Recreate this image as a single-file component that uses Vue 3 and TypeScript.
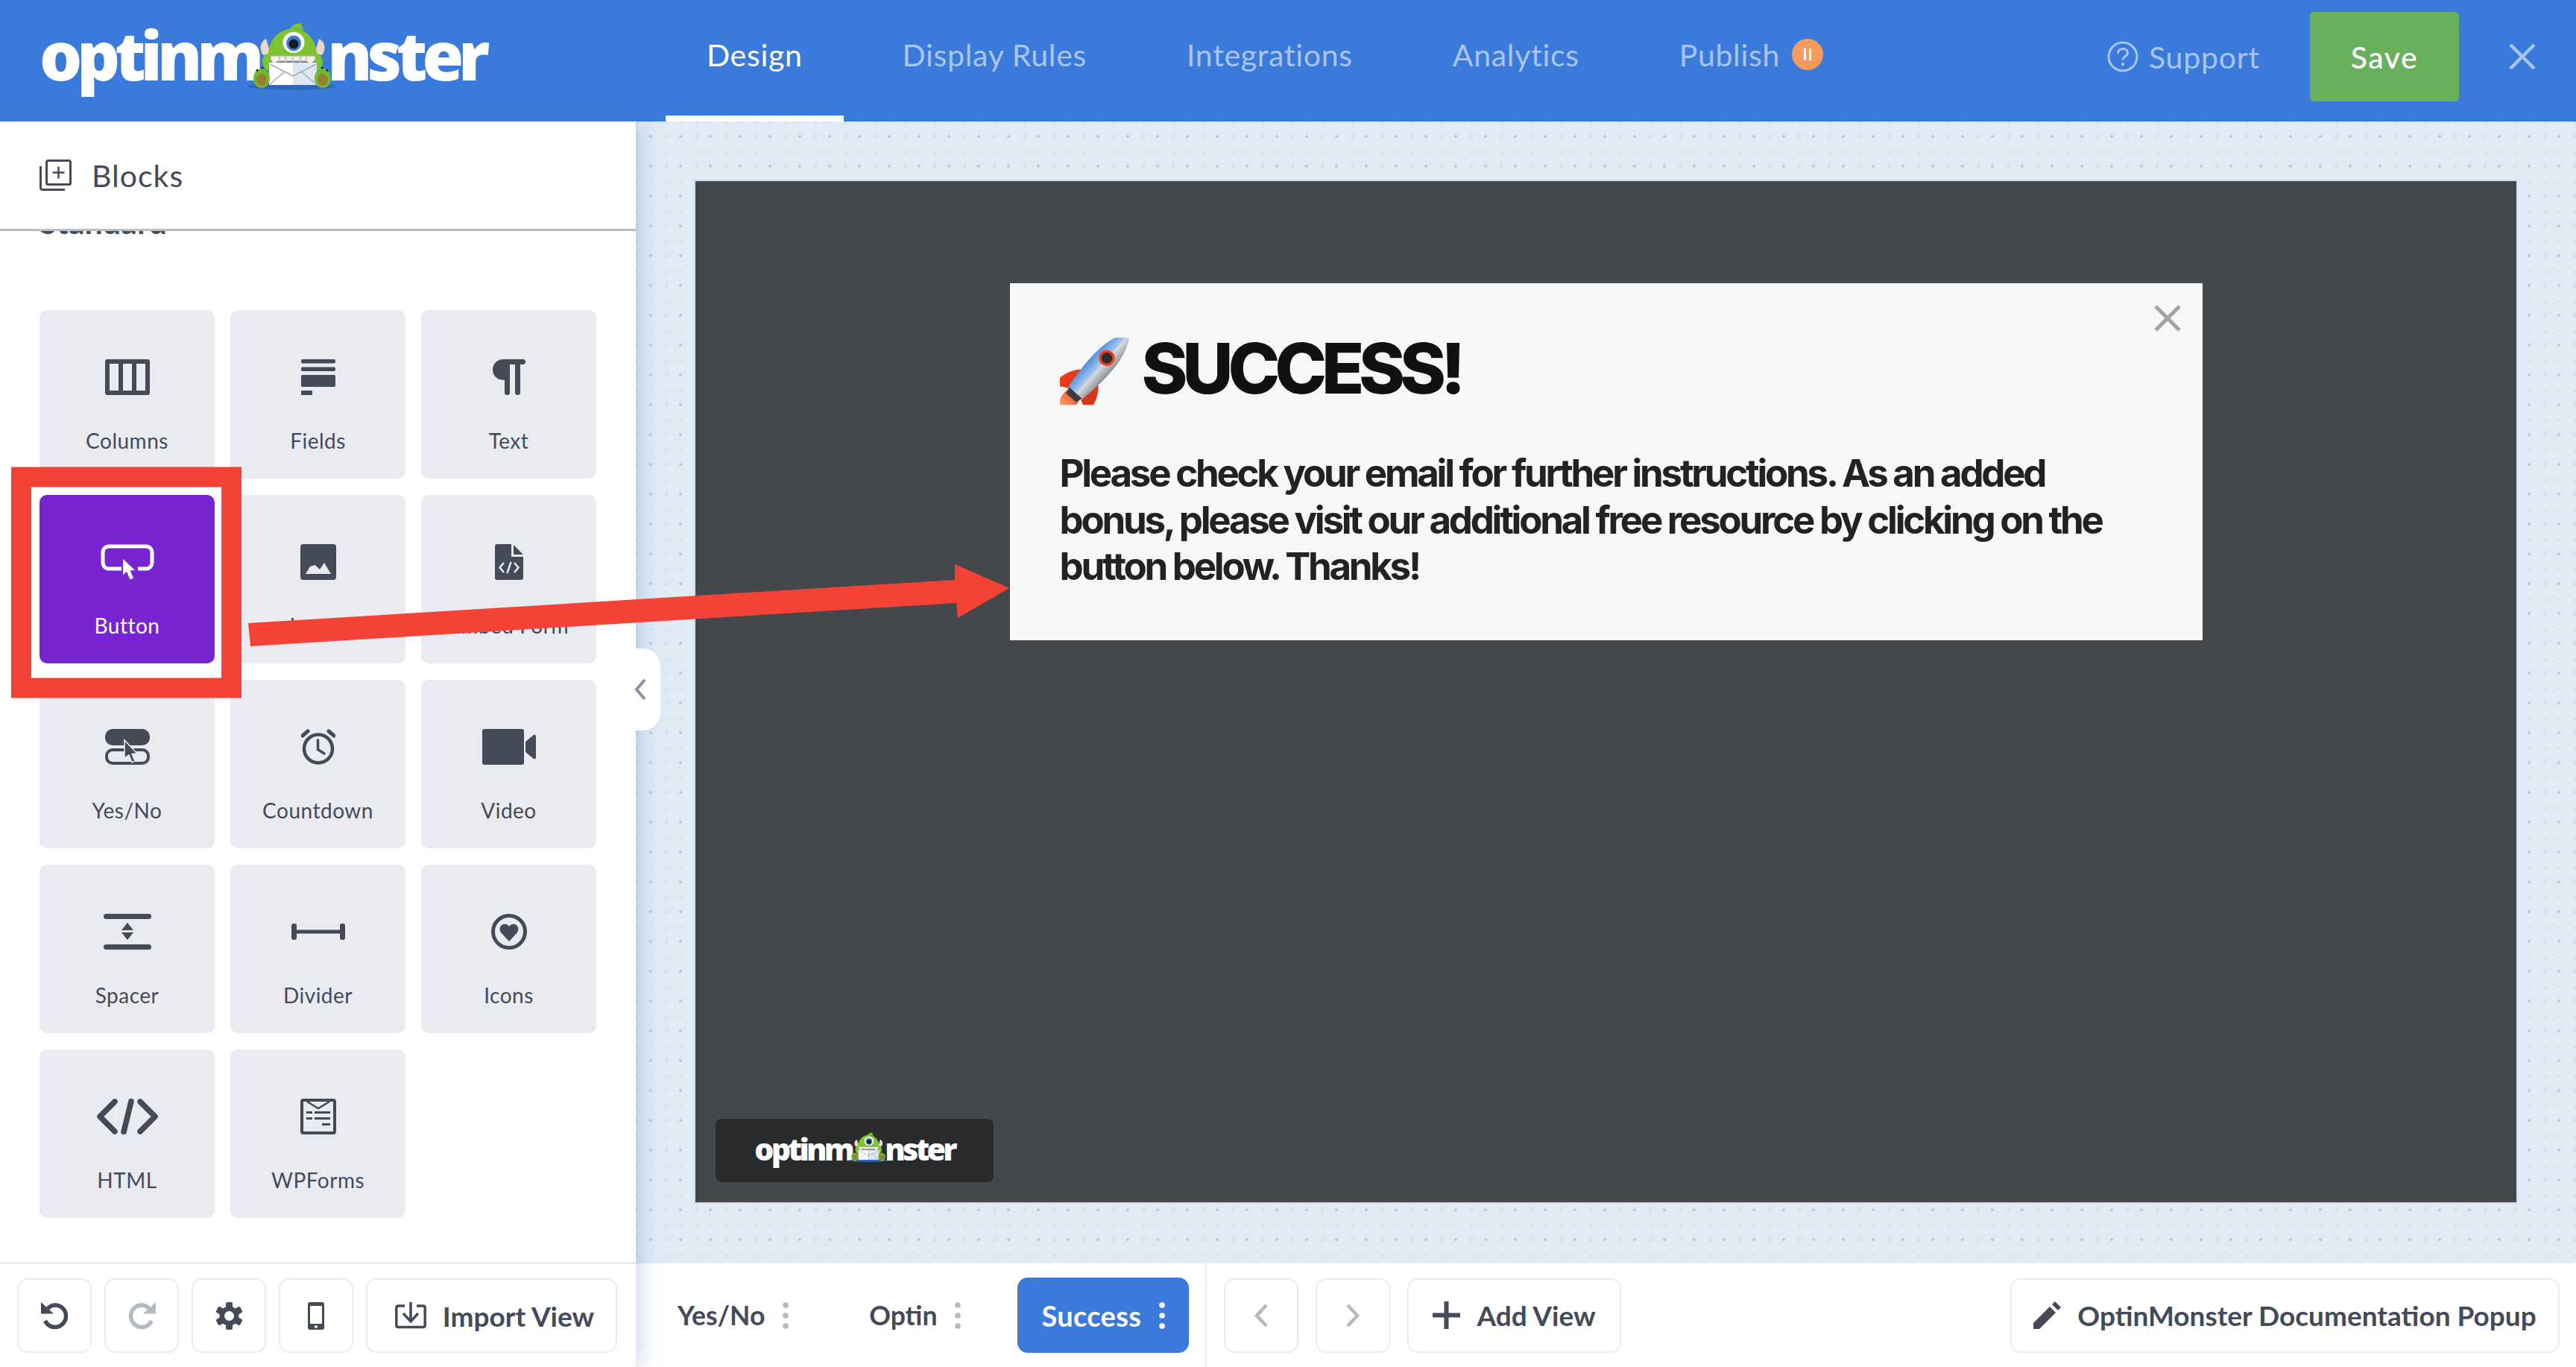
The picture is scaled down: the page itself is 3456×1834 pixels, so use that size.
<script setup lang="ts">
interface Block {
  id: string
  label: string
  w: number
  h: number
  active?: boolean
}

const navItems = ['Design', 'Display Rules', 'Integrations', 'Analytics', 'Publish']

const blocks: Block[] = [
  {id: 'columns', label: 'Columns', w: 60, h: 48},
  {id: 'fields', label: 'Fields', w: 46, h: 48},
  {id: 'para', label: 'Text', w: 44, h: 48},
  {id: 'button', label: 'Button', w: 72, h: 48, active: true},
  {id: 'image', label: 'Image', w: 48, h: 48},
  {id: 'embed', label: 'Embed Form', w: 38, h: 48},
  {id: 'yesno', label: 'Yes/No', w: 60, h: 48},
  {id: 'clock', label: 'Countdown', w: 46, h: 48},
  {id: 'video', label: 'Video', w: 72, h: 48},
  {id: 'spacer', label: 'Spacer', w: 64, h: 48},
  {id: 'divider', label: 'Divider', w: 72, h: 48},
  {id: 'heart', label: 'Icons', w: 48, h: 48},
  {id: 'code', label: 'HTML', w: 82, h: 48},
  {id: 'wpforms', label: 'WPForms', w: 48, h: 48},
]

const views = [
  {name: 'Yes/No', active: false},
  {name: 'Optin', active: false},
  {name: 'Success', active: true},
]

const gearTeeth = [0, 60, 120]
</script>

<template>
  <div class="app">
    <svg class="defs" aria-hidden="true">
      <symbol id="monster" viewBox="0 0 118 91">
        <ellipse cx="59" cy="86" rx="59" ry="4.5" fill="#2f66ba"/>
        <path d="M56 11C57 4 65 0 72 2C69 4 75 7 74 12C70 8 62 7 56 11Z" fill="#7cc52f"/>
        <path d="M24 22C16 26 14 36 20 44L30 42Z" fill="#e8d6c8"/>
        <path d="M95 22C103 26 105 36 99 44L89 42Z" fill="#e8d6c8"/>
        <path d="M19 52C19 46 23 42 27 42C28 26 38 10 60 8C82 10 91 26 92 42C96 42 100 46 100 54C100 62 94 66 90 64L88 48H31L29 64C24 66 19 60 19 52Z" fill="#7cc52f"/>
        <ellipse cx="61" cy="27" rx="14.500" ry="14" fill="#fff"/>
        <ellipse cx="61" cy="28" rx="10" ry="10.500" fill="#3c7fd1"/>
        <circle cx="61" cy="29" r="6.500" fill="#1b1b1b"/>
        <path d="M30 45H90V50L84 56L78 52H40L34 56L30 50Z" fill="#f4efe6" stroke="#a8a8a0" stroke-width="1"/>
        <path d="M42 46V53M50 46V55M60 46V55M70 46V55M78 46V53" stroke="#c9b9a8" stroke-width="1.5"/>
        <path d="M28 54H60V84H28Z" fill="#fff"/>
        <path d="M60 54H92V84H60Z" fill="#dce7f4"/>
        <path d="M29 56L60 72L91 56M29 83L49 66M91 83L71 66" fill="none" stroke="#a9adb0" stroke-width="1.6"/>
        <ellipse cx="18" cy="75" rx="11" ry="13" fill="#6fb92a"/>
        <ellipse cx="100" cy="75" rx="11" ry="13" fill="#6fb92a"/>
        <ellipse cx="18" cy="77" rx="7" ry="8" fill="#b4553f" opacity=".6"/>
        <ellipse cx="100" cy="77" rx="7" ry="8" fill="#b4553f" opacity=".6"/>
        <path d="M10 66l2-4 2 3zM17 62l2-3 2 3zM97 62l2-3 2 3zM104 65l2-3 2 4z" fill="#1b1b1b"/>
      </symbol>
      <symbol id="columns" viewBox="0 0 60 48">
        <path fill="currentColor" fill-rule="evenodd" d="M3 0H57A3 3 0 0 1 60 3V45A3 3 0 0 1 57 48H3A3 3 0 0 1 0 45V3A3 3 0 0 1 3 0ZM6 6V42H18V6ZM24 6V42H36V6ZM42 6V42H54V6Z"/>
      </symbol>
      <symbol id="fields" viewBox="0 0 46 48">
        <g fill="currentColor">
          <rect width="46" height="5.5" rx="2"/>
          <rect y="10.500" width="46" height="5.500" rx="2"/>
          <rect y="21" width="46" height="16" rx="2"/>
          <rect y="42" width="15" height="6"/>
        </g>
      </symbol>
      <symbol id="para" viewBox="0 0 44 48">
        <path fill="currentColor" d="M15 0H40.500A3.500 3.500 0 0 1 40.500 7H37V44.500A3.500 3.500 0 0 1 30 44.500V7H23V44.500A3.500 3.500 0 0 1 16 44.500V28C6 28 0 22 0 14C0 6 6 0 15 0Z"/>
      </symbol>
      <symbol id="button" viewBox="0 0 72 48">
        <path fill="none" stroke="currentColor" stroke-width="5" d="M28 33H11A8 8 0 0 1 3 25V11A8 8 0 0 1 11 3H61A8 8 0 0 1 69 11V25A8 8 0 0 1 61 33H50"/>
        <path fill="currentColor" d="M30 20V41L35 37L39.500 47.500L44 45.500L39.500 35.500L46 35Z"/>
      </symbol>
      <symbol id="image" viewBox="0 0 48 48">
        <path fill="currentColor" fill-rule="evenodd" d="M4 0H44A4 4 0 0 1 48 4V44A4 4 0 0 1 44 48H4A4 4 0 0 1 0 44V4A4 4 0 0 1 4 0ZM7 40H41L32 25L26 34L20 28L13 30Z"/>
      </symbol>
      <symbol id="embed" viewBox="0 0 38 48">
        <path fill="currentColor" fill-rule="evenodd" d="M3 0H22V17H38V45A3 3 0 0 1 35 48H3A3 3 0 0 1 0 45V3A3 3 0 0 1 3 0ZM25 1L38 14H25Z"/>
        <path fill="none" stroke="#e9ebf0" stroke-width="2.500" d="M12 25L6.500 31.500L12 38M26 25L31.500 31.500L26 38M21.500 24L16.500 39"/>
      </symbol>
      <symbol id="yesno" viewBox="0 0 60 48">
        <rect width="60" height="22" rx="10" fill="currentColor"/>
        <rect x="2" y="28" width="56" height="18" rx="8" fill="none" stroke="currentColor" stroke-width="4"/>
        <path fill="currentColor" stroke="#e9ebf0" stroke-width="1.500" d="M26 15V39L32 35L36 45L40 43L36 33.500L43 33Z"/>
      </symbol>
      <symbol id="clock" viewBox="0 0 46 48">
        <circle cx="23" cy="26.500" r="19" fill="none" stroke="currentColor" stroke-width="4.500"/>
        <path d="M22.500 15V27.500L31 33" fill="none" stroke="currentColor" stroke-width="3.500" stroke-linecap="round"/>
        <path d="M2 9L9 3M44 9L37 3" fill="none" stroke="currentColor" stroke-width="5" stroke-linecap="round"/>
      </symbol>
      <symbol id="video" viewBox="0 0 72 48">
        <path fill="currentColor" d="M3 0H53A3 3 0 0 1 56 3V45A3 3 0 0 1 53 48H3A3 3 0 0 1 0 45V3A3 3 0 0 1 3 0ZM58 17L69 8C70 7 72 8 72 10V38C72 40 70 41 69 40L58 31Z"/>
      </symbol>
      <symbol id="spacer" viewBox="0 0 64 48">
        <g fill="currentColor">
          <rect width="64" height="7" rx="3.500"/>
          <rect y="41" width="64" height="7" rx="3.500"/>
          <path d="M32 12L40 22H24ZM32 35L24 25H40Z"/>
        </g>
      </symbol>
      <symbol id="divider" viewBox="0 0 72 48">
        <g fill="currentColor">
          <rect x="0" y="13" width="7" height="22" rx="3"/>
          <rect x="65" y="13" width="7" height="22" rx="3"/>
          <rect x="4" y="21.500" width="64" height="5"/>
        </g>
      </symbol>
      <symbol id="heart" viewBox="0 0 48 48">
        <circle cx="24" cy="24" r="21.500" fill="none" stroke="currentColor" stroke-width="5"/>
        <path fill="currentColor" d="M24 37L13 25C9 19 14 12 20 14C22 14.500 23 15.500 24 17C25 15.500 26 14.500 28 14C34 12 39 19 35 25Z"/>
      </symbol>
      <symbol id="code" viewBox="0 0 82 48">
        <path fill="none" stroke="currentColor" stroke-width="7.500" stroke-linecap="round" stroke-linejoin="round" d="M24 4L4 24L24 44M58 4L78 24L58 44M46 3.500L36 44.500"/>
      </symbol>
      <symbol id="wpforms" viewBox="0 0 48 48">
        <rect x="2" y="2" width="44" height="44" rx="2" fill="none" stroke="currentColor" stroke-width="4"/>
        <path fill="none" stroke="currentColor" stroke-width="2.500" d="M9 4L24 13L39 4"/>
        <g fill="currentColor">
          <rect x="8" y="17" width="8" height="3"/>
          <rect x="19" y="17" width="21" height="3"/>
          <rect x="8" y="25" width="8" height="3"/>
          <rect x="19" y="25" width="21" height="3"/>
          <rect x="29" y="33" width="11" height="3"/>
        </g>
      </symbol>
      <symbol id="undo" viewBox="0 0 37 37">
        <path fill="none" stroke="currentColor" stroke-width="5.500" d="M9 8.500C12 5.500 15 4 19 4C27 4 33.500 10.500 33.500 18.500C33.500 26.500 27 33.500 19 33.500C13 33.500 8 30 5.500 25"/>
        <path fill="currentColor" d="M0 0L17 15.500H0Z"/>
      </symbol>
    </svg>

    <header class="topbar">
      <div class="logo">
        <span>optinm</span><svg class="logo-mark"><use href="#monster"/></svg><span>nster</span>
      </div>
      <nav class="nav">
        <a v-for="(item, i) in navItems" :key="item" class="nav-item" :class="{active: i === 0}">
          {{ item }}
          <svg v-if="item === 'Publish'" class="pause" viewBox="0 0 42 42">
            <circle cx="21" cy="21" r="21" fill="#f49b5d"/>
            <path d="M17.500 13V29M24.500 13V29" stroke="#fff" stroke-width="3"/>
          </svg>
        </a>
      </nav>
      <div class="top-actions">
        <a class="support">
          <svg viewBox="0 0 42 42" width="42" height="42" fill="none" stroke="currentColor">
            <circle cx="21" cy="21" r="19" stroke-width="3"/>
            <path d="M14.500 16.500C14.500 12.500 17.500 10.500 21 10.500C24.500 10.500 27.500 12.500 27.500 16C27.500 20.500 21 20.500 21 25.500" stroke-width="3"/>
            <path d="M21 29V33" stroke-width="3.500"/>
          </svg>
          Support
        </a>
        <button class="save">Save</button>
        <svg class="close" viewBox="0 0 36 36" fill="none" stroke="currentColor" stroke-width="4.500">
          <path d="M2 2L34 34M34 2L2 34"/>
        </svg>
      </div>
    </header>

    <div class="main">
      <aside class="sidebar">
        <div class="side-head">
          <svg viewBox="0 0 43 42" width="43" height="42" fill="none" stroke="currentColor" stroke-width="3">
            <rect x="9.500" y="1.500" width="32" height="32" rx="2"/>
            <path d="M1.500 9V38A2.500 2.500 0 0 0 4 40.500H34"/>
            <path d="M25.500 9.500V25.500M17.500 17.500H33.500" stroke-width="2.500"/>
          </svg>
          Blocks
        </div>
        <div class="side-body">
          <h3 class="section-title">Standard</h3>
          <div class="tiles">
            <div v-for="b in blocks" :key="b.id" class="tile" :class="{active: b.active}">
              <svg :width="b.w" :height="b.h"><use :href="'#' + b.id"/></svg>
              <span>{{ b.label }}</span>
            </div>
          </div>
        </div>
        <div class="side-foot">
          <button class="tool">
            <svg width="37" height="37"><use href="#undo"/></svg>
          </button>
          <button class="tool muted">
            <svg width="37" height="37" class="flip"><use href="#undo"/></svg>
          </button>
          <button class="tool">
            <svg viewBox="0 0 37 37" width="37" height="37">
              <rect v-for="a in gearTeeth" :key="a" x="14" y="0" width="9" height="37" rx="2" fill="currentColor" :transform="`rotate(${a} 18.5 18.5)`"/>
              <circle cx="18.500" cy="18.500" r="13" fill="currentColor"/>
              <circle cx="18.500" cy="18.500" r="6.500" fill="#fff"/>
            </svg>
          </button>
          <button class="tool">
            <svg viewBox="0 0 22 37" width="22" height="37">
              <rect width="22" height="37" rx="3" fill="currentColor"/>
              <rect x="3" y="5" width="16" height="24" fill="#fff"/>
              <circle cx="11" cy="33" r="2" fill="#fff"/>
            </svg>
          </button>
          <button class="tool wide">
            <svg viewBox="0 0 42 36" width="42" height="36" fill="none" stroke="currentColor" stroke-width="3.500">
              <path d="M13 5H4A2.500 2.500 0 0 0 1.800 7.500V31A2.500 2.500 0 0 0 4 33.500H38A2.500 2.500 0 0 0 40.200 31V7.500A2.500 2.500 0 0 0 38 5H29"/>
              <path d="M21 0V25M11 15L21 26L31 15"/>
            </svg>
            Import View
          </button>
        </div>
      </aside>

      <section class="workspace">
        <div class="canvas">
          <div class="collapse">
            <svg viewBox="0 0 18 30" width="18" height="30" fill="none" stroke="#8a94a0" stroke-width="4"><path d="M15 2L4 15L15 28"/></svg>
          </div>
          <div class="stage">
            <div class="popup">
              <svg class="popup-close" viewBox="0 0 36 36" fill="none" stroke="#9ea3a6" stroke-width="5">
                <path d="M2 2L34 34M34 2L2 34"/>
              </svg>
              <h1 class="popup-title">
                <svg class="rocket" viewBox="0 0 95 90">
                  <defs>
                    <linearGradient id="hull" x1="0" x2="1" y1="0" y2="0">
                      <stop offset="0" stop-color="#4f8fdc"/>
                      <stop offset=".5" stop-color="#a9c8ec"/>
                      <stop offset=".55" stop-color="#d8dbdf"/>
                      <stop offset="1" stop-color="#8b9096"/>
                    </linearGradient>
                    <linearGradient id="flame" x1="0" x2="0" y1="0" y2="1">
                      <stop offset="0" stop-color="#f0532c"/>
                      <stop offset="1" stop-color="#fbc48f"/>
                    </linearGradient>
                  </defs>
                  <g transform="translate(48 44) rotate(42) scale(1.12)">
                    <path d="M-9 38C-13 50 -7 58 0 68C7 58 13 50 9 38Z" fill="url(#flame)"/>
                    <path d="M-13 10C-24 20 -29 36 -25 52C-22 44 -16 40 -10 38Z" fill="#ea3c1c"/>
                    <path d="M13 10C24 20 29 36 25 52C22 44 16 40 10 38Z" fill="#d83418"/>
                    <path d="M0 -62C-16 -40 -18 -10 -11 38H11C18 -10 16 -40 0 -62Z" fill="url(#hull)"/>
                    <circle cx="0" cy="-20" r="8" fill="#2b2b30" stroke="#e8401f" stroke-width="3"/>
                    <path d="M-10 36H10L8 44H-8Z" fill="#3b3b40"/>
                  </g>
                </svg>
                SUCCESS!
              </h1>
              <p class="popup-text">
                Please check your email for further instructions. As an added bonus, please visit our additional free resource by clicking on the button below. Thanks!
              </p>
            </div>
            <div class="powered">
              <span>optinm</span><svg class="powered-mark"><use href="#monster"/></svg><span>nster</span>
            </div>
          </div>
        </div>
        <div class="viewbar">
          <div class="views">
            <div v-for="v in views" :key="v.name" class="view" :class="{active: v.active}">
              {{ v.name }}
              <svg viewBox="0 0 8 36" width="8" height="36"><g fill="currentColor"><circle cx="4" cy="4" r="3.800"/><circle cx="4" cy="18" r="3.800"/><circle cx="4" cy="32" r="3.800"/></g></svg>
            </div>
          </div>
          <div class="view-actions">
            <button class="tool">
              <svg viewBox="0 0 20 32" width="20" height="32" fill="none" stroke="#b4bac2" stroke-width="4.500"><path d="M17 2L4 16L17 30"/></svg>
            </button>
            <button class="tool">
              <svg viewBox="0 0 20 32" width="20" height="32" fill="none" stroke="#b4bac2" stroke-width="4.500"><path d="M3 2L16 16L3 30"/></svg>
            </button>
            <button class="tool add">
              <svg viewBox="0 0 37 37" width="37" height="37" fill="none" stroke="currentColor" stroke-width="6"><path d="M18.500 0V37M0 18.500H37"/></svg>
              Add View
            </button>
          </div>
          <button class="tool doc">
            <svg viewBox="0 0 37 37" width="37" height="37" fill="currentColor">
              <path d="M0 29L22 7L30 15L8 37H0ZM25 4L29 0L37 8L33 12Z"/>
            </svg>
            OptinMonster Documentation Popup
          </button>
        </div>
      </section>
    </div>

    <svg class="annotation" viewBox="0 0 3456 1834">
      <rect x="28.500" y="640" width="282" height="283" fill="none" stroke="#f44336" stroke-width="27"/>
      <polygon points="333,836 1281,778 1281,757 1354,789 1285,829 1283,809 336,867" fill="#f44336"/>
    </svg>
  </div>
</template>

<style>
html, body {
  margin: 0;
  background: #fff;
}
</style>

<style scoped>
.app {
  position: relative;
  width: 3456px;
  height: 1834px;
  display: flex;
  flex-direction: column;
  overflow: hidden;
  font-family: Lato, "Open Sans", sans-serif;
  color: #454a59;
}

.defs {
  position: absolute;
  width: 0;
  height: 0;
}

.topbar {
  flex: 0 0 163px;
  display: flex;
  align-items: center;
  background: #3a7adb;
  color: #fff;
}

.logo {
  display: flex;
  align-items: baseline;
  margin-left: 53px;
  width: 840px;
  flex: none;
  font-family: "Open Sans", sans-serif;
  font-weight: 800;
  font-size: 90px;
  letter-spacing: -7px;
  line-height: 1;
  color: #fff;
  transform: translateY(-8px);
}

.logo-mark {
  width: 118px;
  height: 91px;
  margin: 0 -12px 0 -14px;
  position: relative;
  top: 2px;
  align-self: center;
}

.nav {
  display: flex;
  gap: 24px;
  align-self: stretch;
}

.nav-item {
  display: flex;
  align-items: center;
  gap: 16px;
  padding: 0 55px 9px;
  font-size: 41px;
  letter-spacing: 0.7px;
  color: #a9c4ef;
  border-bottom: 8px solid transparent;
  white-space: nowrap;
}

.nav-item.active {
  color: #fff;
  border-bottom-color: #fff;
}

.pause {
  width: 42px;
  height: 42px;
}

.top-actions {
  display: flex;
  align-items: center;
  align-self: flex-start;
  margin: 16px 0 0 auto;
  height: 120px;
  color: #a9c4ef;
}

.support {
  display: flex;
  align-items: center;
  gap: 14px;
  font-size: 41px;
  letter-spacing: 0.8px;
}

.save {
  width: 200px;
  height: 120px;
  margin-left: 67px;
  border: 0;
  border-radius: 5px;
  background: #68b05c;
  color: #fff;
  font: inherit;
  font-size: 41px;
  font-weight: 500;
  letter-spacing: 1.5px;
}

.close {
  width: 36px;
  height: 36px;
  margin: 0 54px 0 67px;
}

.main {
  flex: 1;
  display: flex;
  min-height: 0;
}

.sidebar {
  position: relative;
  z-index: 2;
  flex: 0 0 853px;
  display: flex;
  flex-direction: column;
  background: #fff;
  box-shadow: 0 0 32px rgba(80, 120, 195, 0.4);
}

.side-head {
  flex: 0 0 147px;
  box-sizing: border-box;
  display: flex;
  align-items: center;
  gap: 27px;
  padding-left: 53px;
  font-size: 41px;
  letter-spacing: 1px;
  border-bottom: 3px solid #b5bfca;
}

.side-body {
  flex: 1;
  min-height: 0;
  overflow: hidden;
  padding: 0 53px;
}

.section-title {
  margin: -37px 0 93px;
  font-size: 43px;
  line-height: 50px;
  font-weight: 700;
}

.tiles {
  display: grid;
  grid-template-columns: repeat(3, 235px);
  grid-auto-rows: 226px;
  gap: 22px 21px;
}

.tile {
  display: flex;
  flex-direction: column;
  align-items: center;
  padding-top: 66px;
  box-sizing: border-box;
  border-radius: 10px;
  background: #e9ebf0;
  font-size: 28px;
  letter-spacing: 0.5px;
  color: #454a59;
}

.tile span {
  margin-top: 45px;
  line-height: 32px;
}

.tile.active {
  background: #7825d1;
  color: #fff;
}

.side-foot {
  flex: 0 0 141px;
  box-sizing: border-box;
  display: flex;
  align-items: center;
  gap: 17px;
  padding-left: 23px;
  border-top: 3px solid #ebecf1;
}

.tool {
  display: flex;
  align-items: center;
  justify-content: center;
  flex: 0 0 100px;
  box-sizing: border-box;
  height: 100px;
  padding: 0;
  border: 2.5px solid #ebecf1;
  border-radius: 14px;
  background: #fff;
  color: #454a59;
  font: inherit;
  font-size: 37px;
  font-weight: 700;
}

.tool.muted {
  color: #b4bac2;
}

.tool .flip {
  transform: scaleX(-1);
}

.tool.wide {
  flex: 0 0 337px;
  gap: 22px;
  padding-left: 8px;
}

.workspace {
  flex: 1;
  min-width: 0;
  display: flex;
  flex-direction: column;
}

.canvas {
  position: relative;
  flex: 1;
  min-height: 0;
  box-sizing: border-box;
  padding: 80px 80px 82px;
  background-color: #e0ebf5;
  background-image:
    radial-gradient(circle at 20px 20px, #b4cbef 1.6px, transparent 2.2px),
    radial-gradient(circle at 0 20px, #d3dff1 3px, transparent 3.6px),
    radial-gradient(circle at 20px 0, #d6e2f2 2.5px, transparent 3.1px),
    radial-gradient(circle at 0 0, #d3dff1 3.5px, transparent 4.1px);
  background-size: 40px 40px;
}

.collapse {
  position: absolute;
  left: 0;
  top: 707px;
  width: 33px;
  height: 110px;
  display: flex;
  align-items: center;
  justify-content: flex-start;
  background: #fff;
  border-radius: 0 24px 24px 0;
  z-index: 3;
}

.collapse svg {
  margin-left: -3px;
}

.stage {
  position: relative;
  height: 100%;
  box-sizing: border-box;
  padding-top: 137px;
  background: #45484b;
  outline: 2px solid #d0ddee;
}

.popup {
  position: relative;
  box-sizing: border-box;
  width: 1600px;
  height: 479px;
  margin: 0 auto;
  padding: 73px 67px 0;
  background: #f7f7f7;
  color: #111;
}

.popup-close {
  position: absolute;
  top: 29px;
  right: 29px;
  width: 36px;
  height: 36px;
}

.popup-title {
  display: flex;
  align-items: center;
  gap: 15px;
  margin: 0;
  height: 82px;
  font-family: Inter, sans-serif;
  font-size: 94px;
  font-weight: 800;
  letter-spacing: -7.2px;
  line-height: 82px;
  color: #111;
}

.rocket {
  width: 95px;
  height: 90px;
  margin-top: 8px;
  flex: none;
}

.popup-text {
  width: 1470px;
  margin: 69px 0 0;
  font-family: Inter, sans-serif;
  font-size: 51px;
  font-weight: 650;
  line-height: 62.5px;
  letter-spacing: -3.25px;
  color: #222;
}

.powered {
  position: absolute;
  left: 27px;
  bottom: 27px;
  box-sizing: border-box;
  width: 373px;
  height: 85px;
  display: flex;
  align-items: baseline;
  justify-content: center;
  padding-top: 12px;
  border-radius: 8px;
  background: #2a2b2d;
  color: #fff;
  font-family: "Open Sans", sans-serif;
  font-weight: 800;
  font-size: 41px;
  letter-spacing: -3.7px;
}

.powered-mark {
  width: 52px;
  height: 40px;
  margin: 6px -4px 0 -4px;
  align-self: flex-start;
}

.viewbar {
  flex: 0 0 139px;
  box-sizing: border-box;
  display: flex;
  align-items: center;
  background: #fff;
}

.views {
  display: flex;
  align-items: center;
  align-self: stretch;
  width: 766px;
  box-sizing: border-box;
  padding-left: 24px;
  gap: 44px;
  border-right: 2px solid #ebecf1;
}

.view {
  display: flex;
  align-items: center;
  gap: 24px;
  height: 101px;
  padding: 0 32px;
  font-size: 35.5px;
  font-weight: 700;
}

.view svg {
  color: #b4bac2;
}

.view.active {
  border-radius: 14px;
  background: #3a7adb;
  color: #fff;
  font-size: 38px;
  letter-spacing: 0.3px;
}

.view.active svg {
  color: #fff;
}

.view-actions {
  display: flex;
  gap: 23px;
  margin-left: 23px;
}

.tool.add {
  flex: 0 0 287px;
  gap: 22px;
}

.tool.doc {
  flex: 0 0 737px;
  gap: 22px;
  margin-left: auto;
  margin-right: 22px;
}

.annotation {
  position: absolute;
  inset: 0;
  width: 3456px;
  height: 1834px;
  pointer-events: none;
  z-index: 5;
}
</style>
